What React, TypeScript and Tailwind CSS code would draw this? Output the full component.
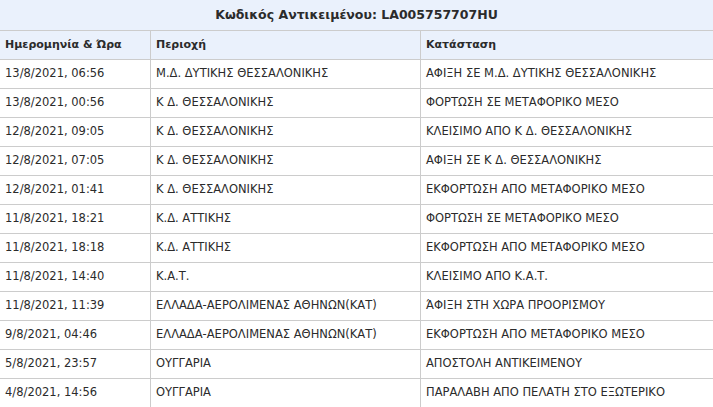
const rows: [string, string, string][] = [
  ["13/8/2021, 06:56", "Μ.Δ. ΔΥΤΙΚΗΣ ΘΕΣΣΑΛΟΝΙΚΗΣ", "ΑΦΙΞΗ ΣΕ Μ.Δ. ΔΥΤΙΚΗΣ ΘΕΣΣΑΛΟΝΙΚΗΣ"],
  ["13/8/2021, 00:56", "Κ Δ. ΘΕΣΣΑΛΟΝΙΚΗΣ", "ΦΟΡΤΩΣΗ ΣΕ ΜΕΤΑΦΟΡΙΚΟ ΜΕΣΟ"],
  ["12/8/2021, 09:05", "Κ Δ. ΘΕΣΣΑΛΟΝΙΚΗΣ", "ΚΛΕΙΣΙΜΟ ΑΠΟ Κ Δ. ΘΕΣΣΑΛΟΝΙΚΗΣ"],
  ["12/8/2021, 07:05", "Κ Δ. ΘΕΣΣΑΛΟΝΙΚΗΣ", "ΑΦΙΞΗ ΣΕ Κ Δ. ΘΕΣΣΑΛΟΝΙΚΗΣ"],
  ["12/8/2021, 01:41", "Κ Δ. ΘΕΣΣΑΛΟΝΙΚΗΣ", "ΕΚΦΟΡΤΩΣΗ ΑΠΟ ΜΕΤΑΦΟΡΙΚΟ ΜΕΣΟ"],
  ["11/8/2021, 18:21", "Κ.Δ. ΑΤΤΙΚΗΣ", "ΦΟΡΤΩΣΗ ΣΕ ΜΕΤΑΦΟΡΙΚΟ ΜΕΣΟ"],
  ["11/8/2021, 18:18", "Κ.Δ. ΑΤΤΙΚΗΣ", "ΕΚΦΟΡΤΩΣΗ ΑΠΟ ΜΕΤΑΦΟΡΙΚΟ ΜΕΣΟ"],
  ["11/8/2021, 14:40", "Κ.Α.Τ.", "ΚΛΕΙΣΙΜΟ ΑΠΟ Κ.Α.Τ."],
  ["11/8/2021, 11:39", "ΕΛΛΑΔΑ-ΑΕΡΟΛΙΜΕΝΑΣ ΑΘΗΝΩΝ(ΚΑΤ)", "ΆΦΙΞΗ ΣΤΗ ΧΩΡΑ ΠΡΟΟΡΙΣΜΟΥ"],
  ["9/8/2021, 04:46", "ΕΛΛΑΔΑ-ΑΕΡΟΛΙΜΕΝΑΣ ΑΘΗΝΩΝ(ΚΑΤ)", "ΕΚΦΟΡΤΩΣΗ ΑΠΟ ΜΕΤΑΦΟΡΙΚΟ ΜΕΣΟ"],
  ["5/8/2021, 23:57", "ΟΥΓΓΑΡΙΑ", "ΑΠΟΣΤΟΛΗ ΑΝΤΙΚΕΙΜΕΝΟΥ"],
  ["4/8/2021, 14:56", "ΟΥΓΓΑΡΙΑ", "ΠΑΡΑΛΑΒΗ ΑΠΟ ΠΕΛΑΤΗ ΣΤΟ ΕΞΩΤΕΡΙΚΟ"],
];

const cols = "grid grid-cols-[151px_270px_1fr]";

export default function App() {
  return (
    <div className="w-[713px] h-[407px] overflow-hidden bg-white text-[#2b2b2b] font-['DejaVu_Sans',sans-serif] text-[11.5px]">
      {/* Title */}
      <div className="h-[31px] border-b border-[#cccccc] bg-[#eaf1fc] flex items-center justify-center text-[12.5px] font-bold">
        Κωδικός Αντικειμένου: LA005757707HU
      </div>

      {/* Column headers */}
      <div className={`${cols} h-[29px] border-b border-[#cccccc] bg-[#eaf1fc] font-bold text-[11px]`}>
        <div className="border-r border-[#cccccc] pl-[5px] flex items-center">Ημερομηνία &amp; Ώρα</div>
        <div className="border-r border-[#cccccc] pl-[5px] flex items-center">Περιοχή</div>
        <div className="pl-[5px] flex items-center">Κατάσταση</div>
      </div>

      {/* Rows */}
      {rows.map((r, i) => (
        <div key={i} className={`${cols} h-[29px] border-b border-[#cccccc]`}>
          <div className="border-r border-[#cccccc] pl-[5px] flex items-center whitespace-nowrap">{r[0]}</div>
          <div className="border-r border-[#cccccc] pl-[5px] flex items-center whitespace-nowrap">{r[1]}</div>
          <div className="pl-[5px] flex items-center whitespace-nowrap">{r[2]}</div>
        </div>
      ))}
    </div>
  );
}
